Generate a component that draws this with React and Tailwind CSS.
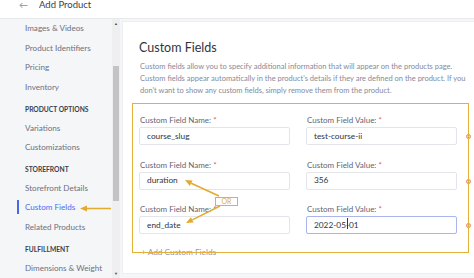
import React from 'react';

const navGroups = [
  { items: ['Images & Videos', 'Product Identifiers', 'Pricing', 'Inventory'] },
  { title: 'Product Options', items: ['Variations', 'Customizations'] },
  { title: 'Storefront', items: ['Storefront Details', 'Custom Fields', 'Related Products'] },
  { title: 'Fulfillment', items: ['Dimensions & Weight'] },
];

const rows = [
  { name: 'course_slug', value: 'test-course-ii' },
  { name: 'duration', value: '356' },
  { name: 'end_date', value: '2022-05-01', focused: true },
];

const Label = ({ children }) => (
  <div className="h-[12px] leading-[12px] pl-[1px] text-[8px] text-[#5f6375]">
    {children} <span className="text-[#e25b5b]">*</span>
  </div>
);

const Field = ({ focused, children }) => (
  <div
    className={`mt-[1px] h-[18px] flex items-center pl-[7px] rounded-[2px] border bg-white text-[8.3px] text-[#313440] ${
      focused ? 'border-[#a9b5ec]' : 'border-[#e3e5eb]'
    }`}
  >
    {children}
  </div>
);

export default function App() {
  return (
    <div className="relative w-[474px] h-[278px] overflow-hidden bg-[#f5f6f8] font-['Lato',sans-serif]">
      {/* top bar */}
      <header className="h-[18.5px] bg-white border-b border-[#e8e9ed] flex items-start">
        <span className="ml-[19px] leading-[10px] text-[9px] text-[#8d909c]">←</span>
        <span className="ml-[11px] leading-[10px] text-[9.5px] text-[#3a3e4c]">Add Product</span>
      </header>

      <div className="flex h-[259.5px]">
        {/* sidebar */}
        <nav className="w-[112px] pl-[17px]">
          {navGroups.map((group, gi) => (
            <div key={gi}>
              {group.title && (
                <div className="h-[21px] pt-[7.4px] pl-[8px] leading-[10px] text-[6.7px] font-bold uppercase text-[#3a3e4c]">
                  {group.title}
                </div>
              )}
              {group.items.map((item) => {
                const active = item === 'Custom Fields';
                return (
                  <div key={item} className="h-[19.6px] flex items-center">
                    <span className={`w-[1.5px] h-[14px] ${active ? 'bg-[#4a68e6]' : 'bg-transparent'}`} />
                    <span className={`ml-[6.5px] text-[8.1px] whitespace-nowrap ${active ? 'text-[#4d6cf0]' : 'text-[#6c7081]'}`}>
                      {item}
                    </span>
                  </div>
                );
              })}
            </div>
          ))}
        </nav>

        {/* scrollbar */}
        <div className="w-[8px] bg-[#efefef] flex flex-col items-center">
          <span className="mt-[2px] h-[5px] text-[4px] leading-[5px] text-[#505050]">▲</span>
          <div className="mt-[40px] w-[6px] h-[135px] bg-[#c3c3c3]" />
          <div className="flex-1" />
          <span className="mb-[2px] h-[5px] text-[4px] leading-[5px] text-[#505050]">▼</span>
        </div>

        {/* content */}
        <main className="flex-1 pl-[3px] pt-[3.5px]">
          <section className="relative h-[251px] bg-white shadow-[0_0_0_1px_#eceef2] pl-[16px] pt-[16.5px]">
            <h1 className="h-[18px] leading-[18px] text-[12.5px] text-[#313440]">Custom Fields</h1>
            <p className="mt-[4.5px] pl-[1px] leading-[12px] text-[7.5px] text-[#858a9b] whitespace-nowrap">
              Custom fields allow you to specify additional information that will appear on the products page.
              <br />
              Custom fields appear automatically in the product's details if they are defined on the product. If you
              <br />
              don't want to show any custom fields, simply remove them from the product.
            </p>

            <div className="mt-[17px]">
              {rows.map((row, i) => (
                <div key={i} className={`flex items-start ${i < rows.length - 1 ? 'h-[44.5px]' : ''}`}>
                  <div className="w-[151px]">
                    <Label>Custom Field Name:</Label>
                    <Field>{row.name}</Field>
                  </div>
                  <div className="w-[151px] ml-[16px]">
                    <Label>Custom Field Value:</Label>
                    <Field focused={row.focused}>
                      {row.focused ? (
                        <>
                          2022-05
                          <span className="relative">
                            -
                            <span className="absolute left-[1px] top-[-1px] w-[1px] h-[11px] bg-[#313440]" />
                          </span>
                          01
                        </>
                      ) : (
                        row.value
                      )}
                    </Field>
                  </div>
                  <div className="ml-[9px] mt-[20px] w-[5px] h-[5px] rounded-full border border-[#e98b6c] bg-[#f6d3c5]" />
                </div>
              ))}
              <div className="mt-[12px] pl-[2px] leading-[12px] text-[8.3px] text-[#8d96bb]">+ Add Custom Fields</div>
            </div>

            {/* annotation: highlight box */}
            <div className="absolute left-[9px] top-[81px] w-[337px] h-[150px] border-[1.5px] border-[#e3b03a] pointer-events-none" />
            {/* annotation: OR tag */}
            <div className="absolute left-[92px] top-[175px] w-[23px] h-[9px] border-[1.5px] border-[#e3b03a] bg-white/70 flex items-center justify-center text-[7px] leading-[7px] text-[#e3b03a]">
              OR
            </div>
          </section>
        </main>
      </div>

      {/* annotation arrows */}
      <svg className="absolute inset-0 pointer-events-none" width="474" height="278" viewBox="0 0 474 278">
        <g stroke="#e2ab2f" strokeWidth="1.5" fill="#e2ab2f">
          <line x1="111" y1="208.5" x2="86" y2="208.5" />
          <polygon points="80,208.5 87,205.5 87,211.5" stroke="none" />
          <line x1="219" y1="196" x2="191.2" y2="183.2" />
          <polygon points="185,180 192.6,180.5 189.8,185.9" stroke="none" />
          <line x1="220" y1="206" x2="192.3" y2="219.9" />
          <polygon points="186,223 193.6,222.6 190.9,217.2" stroke="none" />
        </g>
      </svg>
    </div>
  );
}
